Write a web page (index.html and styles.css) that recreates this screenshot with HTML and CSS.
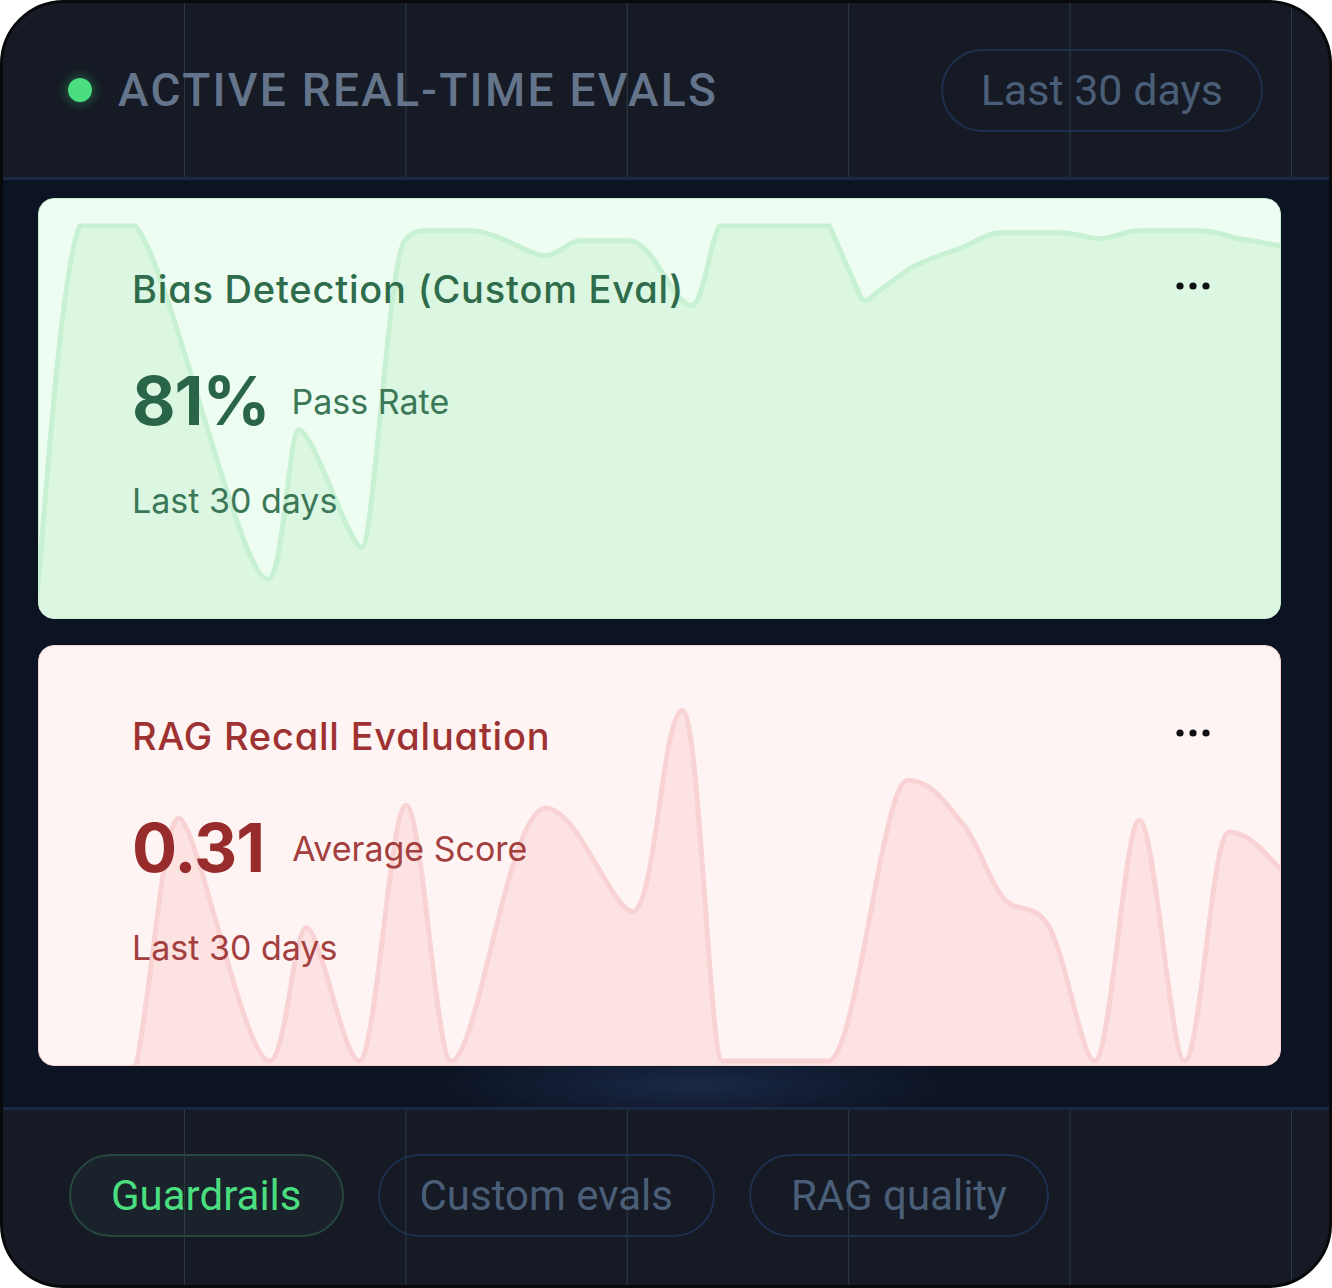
FILE: index.html
```html
<!DOCTYPE html>
<html lang="en">
<head>
<meta charset="utf-8">
<title>Active Real-Time Evals</title>
<link rel="stylesheet" href="styles.css">
</head>
<body>
<div class="frame">
  <header class="head grid-lines">
    <div class="head-title">
      <span class="live-dot"></span>
      <h1 class="title">ACTIVE REAL-TIME EVALS</h1>
    </div>
    <span class="pill pill-muted pill-range">Last 30 days</span>
  </header>

  <main class="panel">
    <section class="card card-green">
      <svg class="chart" viewBox="0 0 1242 421" preserveAspectRatio="none" aria-hidden="true">
        <path class="area" d="M -5,421 L 0,380 C 10,250 25,60 41,27 L 96,27 C 130,60 200,382 229,382 C 245,382 250,232 260,232 C 275,232 310,350 323,350 C 335,350 350,60 366,42 C 372,34 378,32 385,32 L 431,32 C 460,32 490,57 506,57 C 520,57 530,42 541,42 L 591,42 C 615,42 635,107 653,107 C 665,107 672,40 681,27 L 791,27 L 823,100 C 830,106 835,95 841,92 C 855,82 860,78 871,70 C 890,60 905,55 921,50 C 940,42 950,34 961,34 L 1021,34 C 1040,34 1050,40 1061,40 C 1075,40 1085,32 1101,32 L 1161,32 C 1180,32 1190,38 1201,40 C 1220,43 1230,45 1242,47 L 1250,47 L 1250,430 L -5,430 Z"/>
      </svg>
      <div class="card-body">
        <div class="card-top">
          <h2 class="card-title">Bias Detection (Custom Eval)</h2>
          <svg class="more" viewBox="0 0 34 8" width="34" height="8" aria-label="More"><circle cx="4" cy="4" r="3.6"/><circle cx="17" cy="4" r="3.6"/><circle cx="30" cy="4" r="3.6"/></svg>
        </div>
        <div class="metric">
          <span class="metric-value">81%</span>
          <span class="metric-label">Pass Rate</span>
        </div>
        <div class="period">Last 30 days</div>
      </div>
    </section>

    <section class="card card-red">
      <svg class="chart" viewBox="0 0 1244 421" preserveAspectRatio="none" aria-hidden="true">
        <path class="area" d="M 90,430 L 98,419 C 115,330 125,173 140,173 C 158,173 205,417 231,417 C 248,417 255,283 268,283 C 282,283 305,417 321,417 C 338,417 352,160 368,160 C 384,160 398,417 413,417 C 440,417 470,163 508,163 C 540,163 575,267 595,267 C 618,267 625,65 645,65 C 662,65 672,417 685,417 L 791,417 C 820,417 845,135 871,135 C 895,135 910,160 923,175 C 945,200 955,250 975,260 C 985,265 1000,262 1011,280 C 1030,310 1045,417 1058,417 C 1075,417 1088,175 1103,175 C 1118,175 1135,417 1148,417 C 1165,417 1175,187 1193,187 C 1205,187 1215,195 1221,200 C 1230,208 1238,218 1250,230 L 1250,430 Z"/>
      </svg>
      <div class="card-body">
        <div class="card-top">
          <h2 class="card-title">RAG Recall Evaluation</h2>
          <svg class="more" viewBox="0 0 34 8" width="34" height="8" aria-label="More"><circle cx="4" cy="4" r="3.6"/><circle cx="17" cy="4" r="3.6"/><circle cx="30" cy="4" r="3.6"/></svg>
        </div>
        <div class="metric metric-wide">
          <span class="metric-value">0.31</span>
          <span class="metric-label">Average Score</span>
        </div>
        <div class="period">Last 30 days</div>
      </div>
    </section>
  </main>

  <footer class="foot grid-lines">
    <span class="pill pill-active">Guardrails</span>
    <span class="pill pill-muted">Custom evals</span>
    <span class="pill pill-muted">RAG quality</span>
  </footer>
</div>
</body>
</html>
```

FILE: styles.css
```css
* { box-sizing: border-box; }

html, body {
  margin: 0;
  padding: 0;
  background: #ffffff;
}

body {
  width: 1332px;
  height: 1288px;
  font-family: Roboto, "Liberation Sans", sans-serif;
}

.frame {
  width: 1332px;
  height: 1288px;
  border: 3px solid #08090b;
  border-radius: 64px;
  overflow: hidden;
  display: flex;
  flex-direction: column;
  background: #151a24;
}

.grid-lines {
  background-color: #151a24;
  background-image: linear-gradient(to right, rgba(86, 126, 120, 0.34) 0, rgba(86, 126, 120, 0.34) 1px, transparent 1px);
  background-size: 221.4px 100%;
  background-position: 181px 0;
}

/* Header */
.head {
  height: 177px;
  flex: none;
  display: flex;
  align-items: center;
  justify-content: space-between;
  padding: 0 66px 0 65px;
  border-bottom: 3px solid #1a2843;
}

.head-title {
  display: flex;
  align-items: center;
  gap: 26px;
}

.live-dot {
  width: 24px;
  height: 24px;
  border-radius: 50%;
  background: #4ade80;
  box-shadow: 0 0 8px 4px rgba(74, 222, 128, 0.22);
  flex: none;
}

.title {
  margin: 0;
  font-family: Roboto, "Liberation Sans", sans-serif;
  font-weight: 500;
  font-size: 46px;
  line-height: 54px;
  letter-spacing: 2.3px;
  color: #64748b;
}

/* Pills */
.pill {
  display: inline-flex;
  align-items: center;
  justify-content: center;
  height: 83px;
  padding: 0 40px;
  border-radius: 42px;
  border: 2px solid #1d3050;
  font-family: Roboto, "Liberation Sans", sans-serif;
  font-size: 42px;
  line-height: 50px;
  color: #4b5e77;
  white-space: nowrap;
}

.pill-range {
  font-size: 43px;
  padding: 0 38px;
}

.pill-active {
  color: #4ade80;
  border-color: #27483c;
  background: rgba(40, 60, 60, 0.28);
}

/* Main panel */
.panel {
  height: 927px;
  flex: none;
  display: flex;
  flex-direction: column;
  gap: 26px;
  padding: 18px 48px 41px 35px;
  background:
    radial-gradient(ellipse 380px 60px at 690px 905px, rgba(40, 62, 104, 0.5), transparent 70%),
    #0c1323;
}

.card {
  position: relative;
  height: 421px;
  border-radius: 16px;
  overflow: hidden;
}

.card-green {
  background: #eefdf2;
  border: 1px solid #c9efd3;
}

.card-red {
  background: #fef4f3;
  border: 1px solid #f5d2d2;
}

.chart {
  position: absolute;
  left: 0;
  top: 0;
  width: 100%;
  height: 100%;
}

.card-green .area {
  fill: #dbf7e1;
  stroke: #c8f0d3;
  stroke-width: 5;
  stroke-linejoin: round;
}

.card-red .area {
  fill: #fde2e2;
  stroke: #f9d3d3;
  stroke-width: 5;
  stroke-linejoin: round;
}

.card-body {
  position: relative;
  padding: 67px 70px 0 93px;
  font-family: Inter, "Noto Sans", sans-serif;
}

.card-top {
  display: flex;
  align-items: center;
  justify-content: space-between;
}

.card-title {
  margin: 0;
  font-size: 38px;
  line-height: 46px;
  font-weight: 500;
  letter-spacing: 0.8px;
  font-feature-settings: "cv11" 1;
}

.more {
  fill: #0d0f12;
  flex: none;
  margin-top: -6px;
}

.metric {
  display: flex;
  align-items: center;
  gap: 22px;
  margin-top: 49px;
  height: 80px;
}

.metric-wide {
  gap: 28px;
}

.metric-value {
  font-size: 67px;
  line-height: 80px;
  font-weight: 700;
  letter-spacing: -1px;
}

.metric-label {
  font-size: 34px;
  line-height: 40px;
  font-weight: 400;
  margin-top: 2px;
}

.period {
  margin-top: 40px;
  font-size: 34px;
  line-height: 40px;
  font-weight: 400;
}

.card-green .card-title { color: #2f6c4b; }
.card-green .metric-value { color: #2b6547; }
.card-green .metric-label,
.card-green .period { color: #3c7857; }

.card-red .card-title { color: #9e3232; }
.card-red .metric-value { color: #982c2c; }
.card-red .metric-label,
.card-red .period { color: #a3403f; }

/* Footer */
.foot {
  flex: 1;
  display: flex;
  align-items: center;
  gap: 34px;
  padding: 0 0 4px 66px;
  border-top: 3px solid #1a2843;
}
```
